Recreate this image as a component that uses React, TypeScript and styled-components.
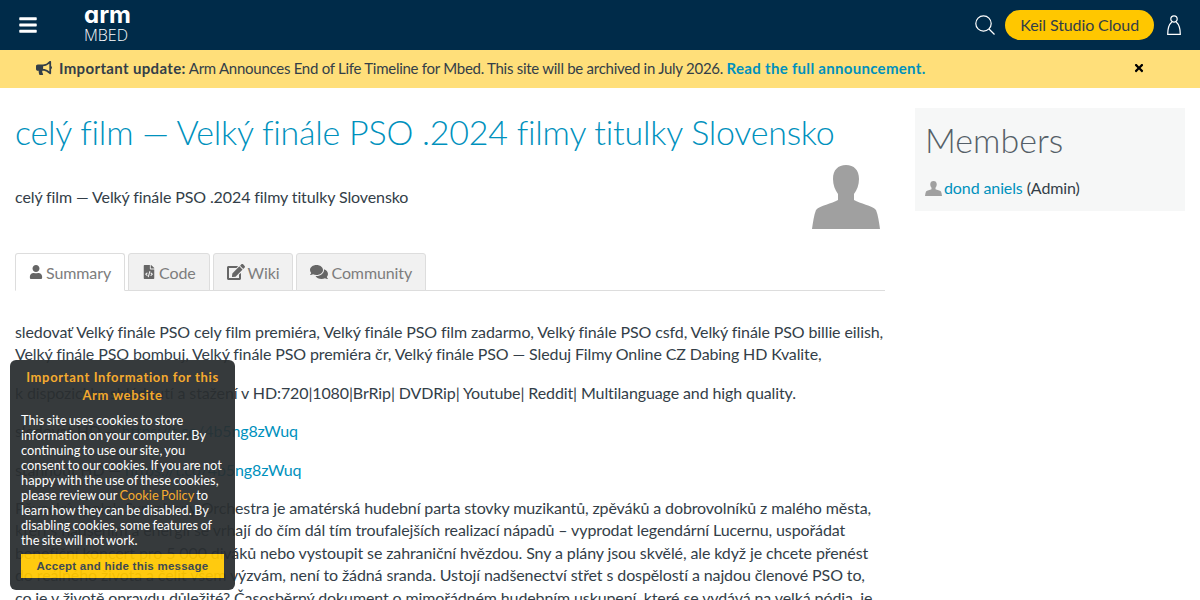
import React from 'react';
import styled, { createGlobalStyle } from 'styled-components';
import { FaBars, FaBullhorn, FaTimes, FaUser, FaFileCode, FaEdit, FaComments } from 'react-icons/fa';

const GlobalStyle = createGlobalStyle`
    html, body {
        margin: 0;
        padding: 0;
        height: 600px;
        overflow: hidden;
        background: #fff;
        font-family: 'Lato', sans-serif;
        font-size: 16px;
        color: #333e48;
    }
    * {
        box-sizing: border-box;
    }
`;

const Silhouette = ({ width, height }: { width: number; height: number }) => (
    <svg width={width} height={height} viewBox="0 0 68 64" fill="#a0a0a0" preserveAspectRatio="none">
        <path d="M34 0C26 0 21 5 21 14C21 20 23 25 26 29L26 35C20 39 8 40 4 45C2 50 1 57 0 64H68C67 57 66 50 64 45C60 40 48 39 42 35L42 29C45 25 47 20 47 14C47 5 42 0 34 0Z" />
    </svg>
);

const App = () => {
    return (
        <>
            <GlobalStyle />
            <TopBar>
                <MenuButton>
                    <FaBars size={20} />
                </MenuButton>
                <Logo>
                    <LogoArm>arm</LogoArm>
                    <LogoMbed>MBED</LogoMbed>
                </Logo>
                <TopBarRight>
                    <svg width="20" height="20" viewBox="0 0 20 20" fill="none" stroke="#fff" strokeWidth="1.2">
                        <circle cx="8.5" cy="8.5" r="7.7" />
                        <path d="M14 14L19.500 19.500" />
                    </svg>
                    <CloudButton>Keil Studio Cloud</CloudButton>
                    <UserIcon width="14" height="20" viewBox="0 0 14 20" fill="none" stroke="#fff" strokeWidth="1.2">
                        <circle cx="7" cy="4" r="3.2" />
                        <path d="M4.800 7C2.500 9 0.700 12.500 0.700 19.300H13.300C13.300 12.500 11.500 9 9.200 7" />
                    </UserIcon>
                </TopBarRight>
            </TopBar>
            <Banner>
                <FaBullhorn size={16} />
                <BannerText>
                    <strong>Important update:</strong> Arm Announces End of Life Timeline for Mbed. This site will be
                    archived in July 2026. <BannerLink>Read the full announcement.</BannerLink>
                </BannerText>
                <CloseIcon>
                    <FaTimes size={12} />
                </CloseIcon>
            </Banner>
            <Page>
                <Main>
                    <Title>celý film — Velký finále PSO .2024 filmy titulky Slovensko</Title>
                    <IntroRow>
                        <Intro>celý film — Velký finále PSO .2024 filmy titulky Slovensko</Intro>
                        <Silhouette width={68} height={64} />
                    </IntroRow>
                    <Tabs>
                        <Tab $active>
                            <FaUser size={14} />
                            Summary
                        </Tab>
                        <Tab>
                            <FaFileCode size={14} />
                            Code
                        </Tab>
                        <Tab>
                            <FaEdit size={18} />
                            Wiki
                        </Tab>
                        <Tab>
                            <FaComments size={18} />
                            Community
                        </Tab>
                    </Tabs>
                    <Paragraph>
                        sledovať Velký finále PSO cely film premiéra, Velký finále PSO film zadarmo, Velký finále PSO csfd, Velký finále PSO billie eilish, Velký finále PSO bombuj, Velký finále PSO premiéra čr, Velký finále PSO — Sleduj Filmy Online CZ Dabing HD Kvalite,
                    </Paragraph>
                    <Paragraph>
                        k dispozici ke shlédnutí a stažení v HD:720|1080|BrRip| DVDRip| Youtube| Reddit| Multilanguage and high quality.
                    </Paragraph>
                    <Paragraph>
                        sledovat HD — <a href="#">https://t.co/4b5ng8zWuq</a>
                    </Paragraph>
                    <Paragraph>
                        stáhnout HD — <a href="#">https://t.co/4b5ng8zWuq</a>
                    </Paragraph>
                    <Paragraph>
                        Pěvecký spolek Symphony Orchestra je amatérská hudební parta stovky muzikantů, zpěváků a dobrovolníků z malého města, kteří s nadšením a energií se vrhají do čím dál tím troufalejších realizací nápadů – vyprodat legendární Lucernu, uspořádat benefiční koncert pro 5 000 diváků nebo vystoupit se zahraniční hvězdou. Sny a plány jsou skvělé, ale když je chcete přenést do reálného života a čelit všem výzvám, není to žádná sranda. Ustojí nadšenectví střet s dospělostí a najdou členové PSO to, co je v životě opravdu důležité? Časosběrný dokument o mimořádném hudebním uskupení, které se vydává na velká pódia, je zároveň
                    </Paragraph>
                </Main>
                <Sidebar>
                    <SidebarTitle>Members</SidebarTitle>
                    <MemberRow>
                        <Silhouette width={17} height={15} />
                        <span>
                            <a href="#">dond aniels</a> (Admin)
                        </span>
                    </MemberRow>
                </Sidebar>
            </Page>
            <CookieBox>
                <CookieTitle>Important Information for this Arm website</CookieTitle>
                <CookieText>
                    This site uses cookies to store information on your computer. By continuing to use our site, you consent to our cookies. If you are not happy with the use of these cookies, please review our <CookieLink>Cookie Policy</CookieLink> to learn how they can be disabled. By disabling cookies, some features of the site will not work.
                </CookieText>
                <CookieButton>Accept and hide this message</CookieButton>
            </CookieBox>
        </>
    );
};

export default App;

const TopBar = styled.div`
    height: 50px;
    background: #002b49;
    display: flex;
    align-items: center;
    padding: 0 19px 0 18px;
`;
const MenuButton = styled.div`
    width: 66px;
    display: flex;
    color: #fff;
`;
const Logo = styled.div`
    display: flex;
    flex-direction: column;
    color: #fff;
    line-height: 1;
`;
const LogoArm = styled.div`
    font-family: 'Inter', sans-serif;
    font-feature-settings: 'cv11';
    font-weight: 700;
    font-size: 24px;
    height: 20px;
    line-height: 16px;
`;
const LogoMbed = styled.div`
    font-family: 'Open Sans', sans-serif;
    font-weight: 300;
    font-size: 16px;
    height: 16px;
`;
const TopBarRight = styled.div`
    margin-left: auto;
    display: flex;
    align-items: center;
    gap: 10px;
`;
const UserIcon = styled.svg`
    margin-left: 3px;
`;
const CloudButton = styled.a`
    background: #ffc700;
    color: #333e48;
    height: 30px;
    line-height: 30px;
    padding: 0 15px;
    border-radius: 15px;
    font-size: 16px;
    letter-spacing: -0.11px;
`;
const Banner = styled.div`
    height: 38px;
    background: #ffdf7a;
    display: flex;
    align-items: center;
    padding: 0 55px 2px 36px;
    color: #333e48;
    font-size: 15px;
`;
const BannerText = styled.div`
    margin-left: 7px;
    letter-spacing: -0.27px;
    strong {
        letter-spacing: 0.35px;
    }
`;
const BannerLink = styled.a`
    color: #0091bd;
    font-weight: 700;
    letter-spacing: 0.3px;
`;
const CloseIcon = styled.div`
    margin-left: auto;
    display: flex;
    color: #000;
`;
const Page = styled.div`
    display: flex;
    padding: 20px 15px 0;
    gap: 30px;
    letter-spacing: -0.11px;
    a {
        color: #0091bd;
        text-decoration: none;
    }
`;
const Main = styled.div`
    width: 870px;
    flex-shrink: 0;
`;
const Title = styled.h1`
    margin: 0;
    font-size: 34px;
    font-weight: 300;
    line-height: 48px;
    letter-spacing: -0.24px;
    color: #0091bd;
`;
const IntroRow = styled.div`
    display: flex;
    justify-content: space-between;
    padding: 9px 5px 0 0;
    height: 97px;
`;
const Intro = styled.p`
    margin: 0;
    padding-top: 21px;
    line-height: 22px;
`;
const Tabs = styled.div`
    display: flex;
    gap: 3px;
    height: 38px;
    border-bottom: 1px solid #dddddd;
    margin-bottom: 30px;
`;
const Tab = styled.div<{ $active?: boolean }>`
    display: flex;
    align-items: center;
    gap: 3px;
    height: 38px;
    padding: 0 13px;
    color: #7d7d7d;
    border: 1px solid #dddddd;
    border-radius: 3px 3px 0 0;
    background: ${(props) => (props.$active ? '#fff' : '#f1f1f1')};
    border-bottom-color: ${(props) => (props.$active ? '#fff' : '#dddddd')};
    svg {
        color: #666;
    }
`;
const Paragraph = styled.p`
    margin: 0 0 16px;
    line-height: 22.400px;
`;
const Sidebar = styled.div`
    width: 270px;
    height: 103px;
    background: #f6f7f7;
    padding: 10px;
`;
const SidebarTitle = styled.h2`
    margin: 0 0 15px;
    font-size: 34px;
    font-weight: 300;
    line-height: 44px;
    letter-spacing: 0;
    color: #555f68;
`;
const MemberRow = styled.div`
    display: flex;
    align-items: center;
    gap: 2px;
    line-height: 22px;
`;
const CookieBox = styled.div`
    position: fixed;
    left: 10px;
    top: 360px;
    width: 225px;
    height: 230px;
    padding: 8px 11px;
    background: #2a2e30;
    opacity: 0.94;
    border-radius: 6px;
    color: #fff;
`;
const CookieTitle = styled.div`
    color: #f5a623;
    font-size: 13px;
    font-weight: 700;
    letter-spacing: 0.65px;
    line-height: 18px;
    text-align: center;
    margin-bottom: 9px;
`;
const CookieText = styled.div`
    font-size: 12.800px;
    line-height: 15px;
    word-spacing: -1px;
`;
const CookieLink = styled.span`
    color: #f5a623;
`;
const CookieButton = styled.div`
    margin-top: 6px;
    height: 24px;
    line-height: 24px;
    background: #ffc700;
    color: #333e48;
    font-family: 'Liberation Sans', sans-serif;
    font-size: 11.500px;
    font-weight: 700;
    letter-spacing: 0.25px;
    text-align: center;
`;
